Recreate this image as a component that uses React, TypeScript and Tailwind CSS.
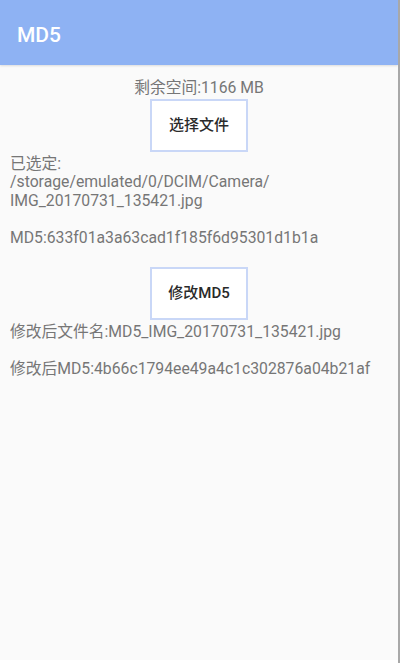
const FONT = "font-['Roboto','Noto_Sans_CJK_SC',sans-serif]";

const PlainButton = ({ label }: { label: string }) => (
  <button className="w-[98px] h-[53px] bg-white border-2 border-[#c9d7f7] text-[#2a2a2a] text-[15px] font-medium flex items-center justify-center">
    {label}
  </button>
);

export default function App() {
  return (
    <div className={`${FONT} w-[400px] h-[663px] flex flex-col bg-[#fafafa] border-r-2 border-[#a8a8a8] overflow-hidden`}>
      {/* Toolbar */}
      <div className="h-[65px] shrink-0 bg-[#8eb2f3] flex items-center px-[17px] pt-[6px] shadow-[0_1px_2px_rgba(0,0,0,0.12)]">
        <span className="text-white text-[21px] font-medium">MD5</span>
      </div>

      <div className="flex-1 flex flex-col px-[10px] pt-[14px] text-[15.75px] leading-[18.5px] text-[#767676]">
        <p className="text-center">剩余空间:1166 MB</p>
        <div className="flex justify-center mt-[1px]">
          <PlainButton label="选择文件" />
        </div>

        <p className="mt-[3px]">已选定:</p>
        <p>/storage/emulated/0/DCIM/Camera/</p>
        <p>IMG_20170731_135421.jpg</p>
        <p className="mt-[18.5px]">MD5:633f01a3a63cad1f185f6d95301d1b1a</p>

        <div className="flex justify-center mt-[20px]">
          <PlainButton label="修改MD5" />
        </div>

        <p className="mt-[3px]">修改后文件名:MD5_IMG_20170731_135421.jpg</p>
        <p className="mt-[18px]">修改后MD5:4b66c1794ee49a4c1c302876a04b21af</p>
      </div>

      <div className="h-[3px] bg-white shrink-0" />
    </div>
  );
}
